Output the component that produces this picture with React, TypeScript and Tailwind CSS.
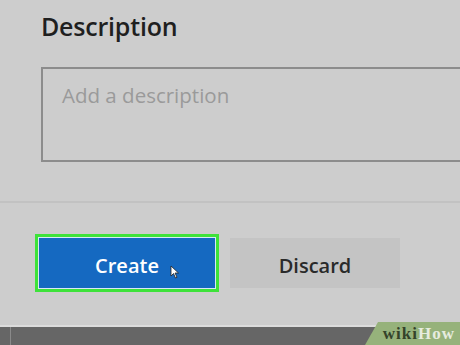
export default function App() {
  return (
    <div className="relative w-[460px] h-[345px] overflow-hidden bg-[#cdcdcd] flex flex-col" style={{ fontFamily: '"Open Sans", "Noto Sans", sans-serif' }}>
      <div className="pl-[41px] pt-[10px]">
        <h2 className="text-[25px] font-semibold text-[#1f1f1f] leading-[33px] tracking-[-0.2px]">Description</h2>
        <div className="mt-[24px] -mr-[20px] h-[95px] border-2 border-[#8c8c8c] pl-[19px] pt-[11px]">
          <span className="text-[20.5px] text-[#9a9a9a]">Add a description</span>
        </div>
      </div>

      <div className="mt-[39px] h-[2px] bg-[#c2c2c2]" />

      <div className="flex items-center gap-[11px] pl-[35px] mt-[31px]">
        <div className="p-[3px] bg-[#3ee23a]">
          <div className="border border-[#d8e8f8] bg-[#1569c1] w-[178px] h-[52px] flex items-center justify-center pt-[5px] relative">
            <span className="text-[20px] font-semibold text-white">Create</span>
            <svg className="absolute left-[131px] top-[27px]" width="10" height="14" viewBox="0 0 10 14">
              <path d="M1 1 L1 11 L3.5 8.5 L5.5 13 L7 12.3 L5 8 L8.5 8 Z" fill="#ffffff" stroke="#222" strokeWidth="0.8" />
            </svg>
          </div>
        </div>
        <button className="w-[170px] h-[50px] bg-[#c4c4c4] flex items-center justify-center pt-[5px]">
          <span className="text-[20px] font-semibold text-[#2a2a2a]">Discard</span>
        </button>
      </div>

      <div className="mt-auto h-[20px] bg-[#666666] border-t-2 border-[#dcdcdc] relative">
        <div className="absolute left-[10px] top-0 bottom-0 w-[1px] bg-[#8a8a8a]" />
        <div className="absolute right-0 -top-[5px] h-[23px] w-[95px] bg-[#96b27b] flex items-center justify-end pr-[5px] pt-[1px]" style={{ clipPath: 'polygon(13px 0, 100% 0, 100% 100%, 0 100%)' }}>
          <span className="text-[17px] font-bold text-[#34432a] tracking-[1px]" style={{ fontFamily: '"Liberation Serif", serif' }}>wiki</span>
          <span className="text-[17px] font-bold text-[#e6ecdf] tracking-[1px]" style={{ fontFamily: '"Liberation Serif", serif' }}>How</span>
        </div>
      </div>
    </div>
  );
}
